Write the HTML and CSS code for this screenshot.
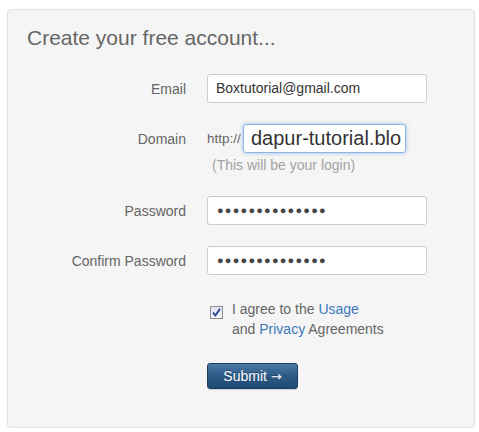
FILE: index.html
```html
<!DOCTYPE html>
<html>
<head>
<meta charset="utf-8">
<title>Create your free account</title>
<link rel="stylesheet" href="styles.css">
</head>
<body>
<div class="panel">
  <h1 class="title">Create your free account...</h1>
  <form class="form">
    <div class="row row-email">
      <label class="label">Email</label>
      <div class="field"><div class="input input-wide">Boxtutorial@gmail.com</div></div>
    </div>
    <div class="row row-domain">
      <label class="label">Domain</label>
      <div class="field domain-field">
        <span class="prefix">http://</span>
        <div class="input input-focus">dapur-tutorial.blo</div>
      </div>
    </div>
    <div class="row row-hint">
      <span></span>
      <div class="hint">(This will be your login)</div>
    </div>
    <div class="row row-pass">
      <label class="label">Password</label>
      <div class="field"><div class="input input-wide dots">●●●●●●●●●●●●●●</div></div>
    </div>
    <div class="row row-confirm">
      <label class="label">Confirm Password</label>
      <div class="field"><div class="input input-wide dots">●●●●●●●●●●●●●●</div></div>
    </div>
    <div class="row row-agree">
      <span></span>
      <div class="agree">
        <span class="checkbox">
          <svg width="9" height="9" viewBox="0 0 9 9"><path d="M1 4.5 L3.4 7.4 L8 0.8" fill="none" stroke="#2b3d8c" stroke-width="1.8"/></svg>
        </span>
        <div class="agree-text">I agree to the <a class="link">Usage</a><br>and <a class="link">Privacy</a> Agreements</div>
      </div>
    </div>
    <div class="row row-submit">
      <span></span>
      <div><button type="button" class="btn">Submit <span class="arrow">→</span></button></div>
    </div>
  </form>
</div>
</body>
</html>
```
FILE: styles.css
```css
html, body {
  margin: 0;
  padding: 0;
  background: #ffffff;
}
body {
  font-family: "Liberation Sans", Arial, sans-serif;
  font-size: 14px;
  color: #666;
}
.panel {
  box-sizing: border-box;
  margin: 9px 0 0 7px;
  width: 468px;
  height: 419px;
  background: #f5f5f5;
  border: 1px solid #e2e2e2;
  border-radius: 4px;
  box-shadow: 0 1px 2px rgba(0,0,0,0.06);
  padding-top: 15px;
}
.title {
  margin: 0;
  padding-left: 19px;
  font-size: 21px;
  line-height: 26px;
  font-weight: normal;
  color: #666;
}
.form {
  margin: 0;
}
.row {
  display: grid;
  grid-template-columns: 178px 1fr;
  column-gap: 21px;
  align-items: center;
}
.label {
  text-align: right;
  color: #666;
  font-size: 14px;
}
.row-email { margin-top: 23px; }
.row-domain { margin-top: 21px; }
.row-hint { margin-top: 2px; }
.row-pass { margin-top: 21px; }
.row-confirm { margin-top: 21px; }
.row-agree { margin-top: 24px; align-items: start; }
.row-submit { margin-top: 24px; }
.input {
  box-sizing: border-box;
  height: 29px;
  background: #fff;
  border: 1px solid #cccccc;
  border-radius: 3px;
  color: #333;
  font-size: 14px;
  line-height: 27px;
  padding: 0 8px;
  white-space: nowrap;
  overflow: hidden;
}
.input-wide { width: 220px; }
.domain-field {
  display: flex;
  align-items: center;
}
.prefix {
  color: #666;
  font-size: 13.5px;
  width: 36px;
}
.input-focus {
  width: 163px;
  font-size: 20px;
  padding: 0 0 0 7px;
  border-color: #8cb5e3;
  box-shadow: 0 0 4px rgba(82, 145, 220, 0.55);
  color: #333;
}
.hint {
  color: #a3a3a3;
  font-size: 14px;
  line-height: 20px;
  padding-left: 5px;
}
.dots {
  font-size: 11px;
  letter-spacing: 1.2px;
  color: #444;
  padding-left: 9px;
}
.agree {
  display: flex;
  align-items: flex-start;
}
.checkbox {
  box-sizing: border-box;
  width: 13px;
  height: 13px;
  margin: 7px 9px 0 3px;
  border: 1px solid #8f8f8f;
  background: linear-gradient(#dfe3ef, #f3f5fa);
  display: flex;
  align-items: center;
  justify-content: center;
}
.checkbox svg { display: block; }
.agree-text {
  color: #666;
  font-size: 14px;
  line-height: 20px;
}
.link {
  color: #3a7ab9;
  text-decoration: none;
}
.btn {
  box-sizing: border-box;
  width: 91px;
  height: 26px;
  padding: 0;
  border: 1px solid #1d3f63;
  border-radius: 3px;
  background: linear-gradient(#4b7aa7, #2c5a86 50%, #1f4a74);
  color: #fff;
  font-family: "Liberation Sans", Arial, sans-serif;
  font-size: 14px;
  text-shadow: 0 -1px 0 rgba(0,0,0,0.3);
  box-shadow: 0 1px 1px rgba(0,0,0,0.15);
}
.arrow {
  font-family: "DejaVu Sans", sans-serif;
  font-size: 13px;
}
```
